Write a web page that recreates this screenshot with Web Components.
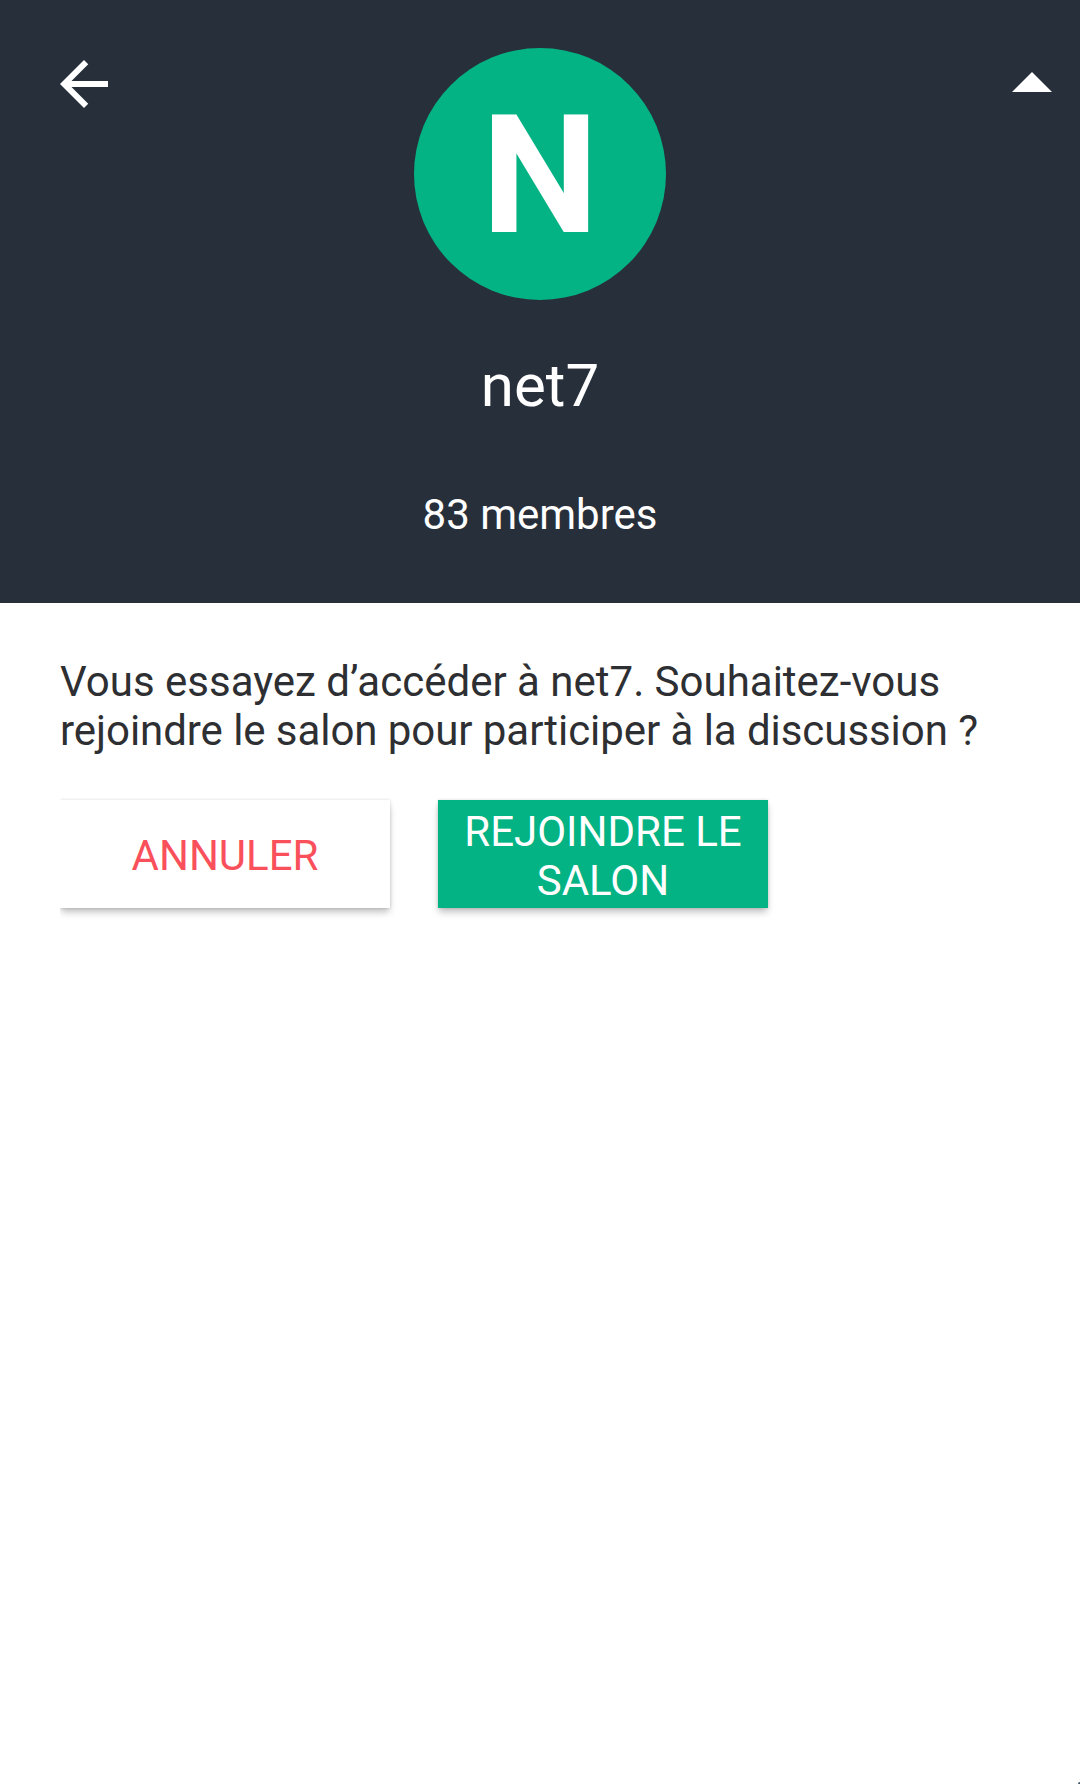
<!DOCTYPE html>
<html lang="fr">
<head>
  <meta charset="utf-8">
  <title>net7</title>
  <style>
    body {
      --header-bg: #272f3a;
      --green: #04b384;
      --red: #f9505b;
      --text: #2e2f32;
      margin: 0;
      background: #fff;
      color: var(--text);
      font: 42px/49px Roboto, sans-serif;
    }

    .tight {
      letter-spacing: -.06px;
    }
  </style>
</head>
<body>
  <room-preview>
    <room-header slot="header" name="net7" members="83 membres"></room-header>
    <p slot="message">Vous essayez d’accéder à net7. Souhaitez-vous <span class="tight">rejoindre le salon pour participer à la discussion ?</span></p>
    <room-button slot="actions">ANNULER</room-button>
    <room-button slot="actions" primary>REJOINDRE LE SALON</room-button>
  </room-preview>

  <script>
    'use strict';

    (function() {
      class RoomAvatar extends HTMLElement {
        constructor() {
          super()

          const shadow = this.attachShadow({ mode: 'open' })

          shadow.innerHTML = `
            <style>
              :host {
                display: flex;
                align-items: center;
                justify-content: center;
                box-sizing: border-box;
                width: 252px;
                height: 252px;
                padding-top: 3px;
                border-radius: 50%;
                background: var(--green);
                color: #fff;
                font-size: 166px;
                font-weight: 700;
                line-height: 194px;
              }
            </style>
            <slot></slot>
          `
        }
      }

      class RoomHeader extends HTMLElement {
        constructor() {
          super()

          const shadow = this.attachShadow({ mode: 'open' })

          shadow.innerHTML = `
            <style>
              :host {
                display: grid;
                grid-template-columns: 1fr auto 1fr;
                box-sizing: border-box;
                height: 603px;
                padding: 48px 28px 64px 48px;
                background: var(--header-bg);
                color: #fff;
              }

              svg {
                display: block;
                fill: currentColor;
              }

              .back {
                width: 72px;
                height: 72px;
              }

              .toggle {
                justify-self: end;
                width: 40px;
                height: 20px;
                margin-top: 24px;
              }

              .info {
                display: flex;
                flex-direction: column;
                align-items: center;
                /* the side paddings differ by 20px */
                margin: 0 10px 0 -10px;
              }

              h1 {
                margin: 50px 0 69px;
                font-size: 60px;
                font-weight: 400;
                line-height: 71px;
              }
            </style>
            <svg class="back" viewBox="0 0 24 24">
              <path d="M20 11H7.83l5.59-5.59L12 4l-8 8 8 8 1.41-1.41L7.83 13H20z"/>
            </svg>
            <div class="info">
              <room-avatar>${this.name.charAt(0).toUpperCase()}</room-avatar>
              <h1>${this.name}</h1>
              <span>${this.members}</span>
            </div>
            <svg class="toggle" viewBox="0 0 10 5">
              <path d="M0 5l5-5 5 5z"/>
            </svg>
          `
        }

        get name() {
          return this.getAttribute('name') || ''
        }

        get members() {
          return this.getAttribute('members') || ''
        }
      }

      class RoomButton extends HTMLElement {
        constructor() {
          super()

          const shadow = this.attachShadow({ mode: 'open' })

          shadow.innerHTML = `
            <style>
              :host {
                display: flex;
                align-items: center;
                justify-content: center;
                box-sizing: border-box;
                width: 330px;
                height: 108px;
                padding: 3px 12px 0;
                background: #fff;
                box-shadow: 0 0 3px rgba(0, 0, 0, .14), 0 5px 7px -1px rgba(0, 0, 0, .25);
                color: var(--red);
                text-align: center;
                cursor: pointer;
              }

              :host([primary]) {
                background: var(--green);
                color: #fff;
              }
            </style>
            <span><slot></slot></span>
          `
        }
      }

      class RoomPreview extends HTMLElement {
        constructor() {
          super()

          const shadow = this.attachShadow({ mode: 'open' })

          shadow.innerHTML = `
            <style>
              :host {
                display: block;
                position: relative;
                height: 1784px;
                overflow: hidden;
              }

              .body {
                padding: 54px 60px 0;
              }

              ::slotted(p) {
                margin: 0;
              }

              /* clips the shadow on the left edge of the first button */
              .actions {
                display: flex;
                gap: 48px;
                margin-top: 33px;
                padding: 12px 0 24px;
                overflow: hidden;
              }

              .corner {
                position: absolute;
                right: 0;
                bottom: 0;
                width: 2px;
                height: 2px;
                border-top-left-radius: 2px;
                background: #3c5560;
              }
            </style>
            <slot name="header"></slot>
            <div class="body">
              <slot name="message"></slot>
              <div class="actions"><slot name="actions"></slot></div>
            </div>
            <div class="corner"></div>
          `
        }
      }

      // let the browser know about the custom elements
      customElements.define('room-avatar', RoomAvatar)
      customElements.define('room-header', RoomHeader)
      customElements.define('room-button', RoomButton)
      customElements.define('room-preview', RoomPreview)
    })()
  </script>
</body>
</html>
